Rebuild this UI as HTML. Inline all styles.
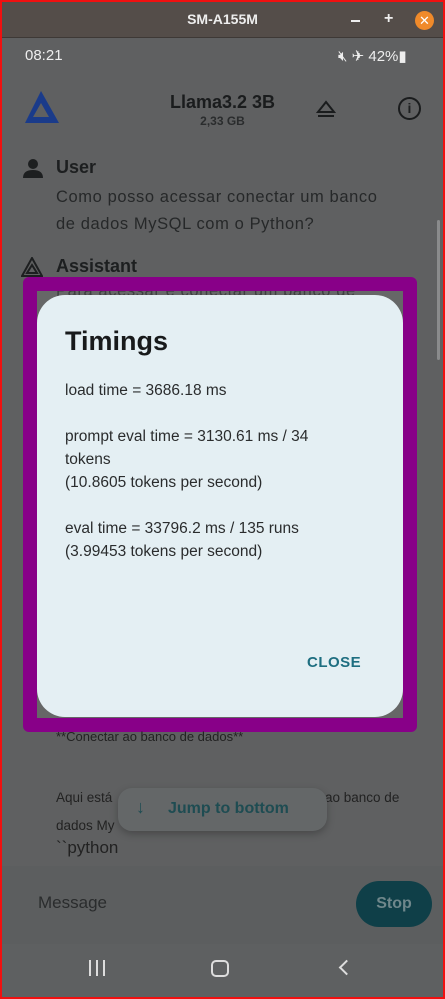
<!DOCTYPE html>
<html><head><meta charset="utf-8"><style>
*{margin:0;padding:0;box-sizing:border-box}
body{width:445px;height:999px;overflow:hidden;background:#5f6061;font-family:"Liberation Sans","DejaVu Sans",sans-serif;position:relative;color:#1d1f20}
.a{position:absolute}
</style></head><body>
<div class="a" style="left:0;top:0;width:445px;height:999px;border:2px solid #f01010;z-index:50;pointer-events:none"></div>
<div class="a" style="left:0;top:0;width:445px;height:38px;background:#544d49;border-bottom:1px solid #3e3936"></div>
<div class="a" style="left:0;top:11px;width:445px;text-align:center;color:#eee;font-weight:bold;font-size:14px">SM-A155M</div>
<div class="a" style="left:351px;top:20px;width:9px;height:2px;background:#eee"></div>
<div class="a" style="left:384px;top:10px;color:#eee;font-weight:bold;font-size:16px">+</div>
<div class="a" style="left:415px;top:11px;width:19px;height:19px;border-radius:50%;background:#f08a2a;color:#fff;font-size:13px;font-weight:bold;text-align:center;line-height:19px">✕</div>

<div class="a" style="left:25px;top:47px;color:#eee;font-size:15px">08:21</div>
<div class="a" style="left:338px;top:47px;color:#eee;font-size:15px">🔇︎ ✈︎ 42%▮</div>

<svg class="a" style="left:23px;top:89px" width="38" height="36" viewBox="0 0 38 36"><path d="M18 2 L2 34 H36 Z M18 14 L10 28 H26 Z" fill="#1a3b8a" fill-rule="evenodd"/></svg>
<div class="a" style="left:0;top:92px;width:445px;text-align:center;font-size:18px;font-weight:bold;color:#1a1c1d">Llama3.2 3B</div>
<div class="a" style="left:0;top:114px;width:445px;text-align:center;font-size:12px;font-weight:bold;color:#2a2c2d">2,33 GB</div>
<svg class="a" style="left:316px;top:100px" width="20" height="18"><path d="M10 2 L2 12 H18 Z" fill="none" stroke="#1a1c1d" stroke-width="2"/><rect x="2" y="15" width="16" height="2" fill="#1a1c1d"/></svg>
<div class="a" style="left:398px;top:97px;width:23px;height:23px;border:2px solid #1a1c1d;border-radius:50%;text-align:center;font-size:14px;font-weight:bold;line-height:19px">i</div>

<svg class="a" style="left:22px;top:158px" width="22" height="22"><circle cx="11" cy="6" r="5" fill="#1d1f20"/><path d="M1 20 Q1 12 11 12 Q21 12 21 20 Z" fill="#1d1f20"/></svg>
<div class="a" style="left:56px;top:157px;font-size:18px;font-weight:bold">User</div>
<div class="a" style="left:56px;top:184px;font-size:16.5px;line-height:27px;color:#262829;letter-spacing:.6px">Como posso acessar conectar um banco<br>de dados MySQL com o Python?</div>
<svg class="a" style="left:21px;top:257px" width="22" height="20"><path d="M11 1 L1 19 H21 Z M11 8 L6 16 H16 Z" fill="none" stroke="#1d1f20" stroke-width="2"/></svg>
<div class="a" style="left:56px;top:256px;font-size:18px;font-weight:bold">Assistant</div>
<div class="a" style="left:56px;top:282px;font-size:16.5px;color:#262829;letter-spacing:.6px">Para acessar e conectar um banco de</div>

<div class="a" style="left:23px;top:277px;width:394px;height:455px;border:14px solid #880088;border-radius:6px;background:rgba(120,120,120,.3)"></div>
<div class="a" style="left:37px;top:295px;width:366px;height:422px;background:#e4eff3;border-radius:28px"></div>
<div class="a" style="left:65px;top:326px;font-size:27px;font-weight:bold;color:#181a1b">Timings</div>
<div class="a" style="left:65px;top:379px;font-size:15.5px;line-height:23px;color:#2a2c2d">load time = 3686.18 ms<br><br>prompt eval time = 3130.61 ms / 34<br>tokens<br>(10.8605 tokens per second)<br><br>eval time = 33796.2 ms / 135 runs<br>(3.99453 tokens per second)</div>
<div class="a" style="left:307px;top:654px;font-size:15px;font-weight:bold;color:#1e6e80;letter-spacing:.5px">CLOSE</div>

<div class="a" style="left:56px;top:729px;font-size:13px;color:#222">**Conectar ao banco de dados**</div>
<div class="a" style="left:56px;top:784px;font-size:13.5px;line-height:28px;color:#222">Aqui está</div>
<div class="a" style="left:310px;top:784px;font-size:13.5px;line-height:28px;color:#222">ta ao banco de</div>
<div class="a" style="left:56px;top:812px;font-size:13.5px;line-height:28px;color:#222">dados My</div>
<div class="a" style="left:56px;top:838px;font-size:17px;color:#222">``python</div>
<div class="a" style="left:118px;top:788px;width:209px;height:43px;border-radius:14px;background:#646768;box-shadow:0 3px 8px rgba(0,0,0,.25)"></div>
<div class="a" style="left:136px;top:797px;font-size:18px;font-weight:bold;color:#1e4c52">↓</div>
<div class="a" style="left:168px;top:800px;font-size:16px;font-weight:bold;color:#1e4c52">Jump to bottom</div>

<div class="a" style="left:0;top:866px;width:445px;height:78px;background:#5c5e5f"></div>
<div class="a" style="left:38px;top:893px;font-size:17px;color:#2a2c2d">Message</div>
<div class="a" style="left:356px;top:881px;width:76px;height:46px;border-radius:23px;background:#0f3f48;color:#6f878b;font-weight:bold;font-size:16px;text-align:center;line-height:46px">Stop</div>

<div class="a" style="left:0;top:944px;width:445px;height:55px;background:#5e6061"></div>
<div class="a" style="left:89px;top:960px;width:2px;height:16px;background:#ddd;box-shadow:7px 0 0 #ddd,14px 0 0 #ddd"></div>
<div class="a" style="left:211px;top:960px;width:18px;height:17px;border:2px solid #ddd;border-radius:5px"></div>
<div class="a" style="left:341px;top:962px;width:11px;height:11px;border-left:2px solid #ddd;border-bottom:2px solid #ddd;transform:rotate(45deg)"></div>
<div class="a" style="left:437px;top:220px;width:3px;height:140px;background:#8a8b8c;border-radius:2px"></div>
</body></html>
